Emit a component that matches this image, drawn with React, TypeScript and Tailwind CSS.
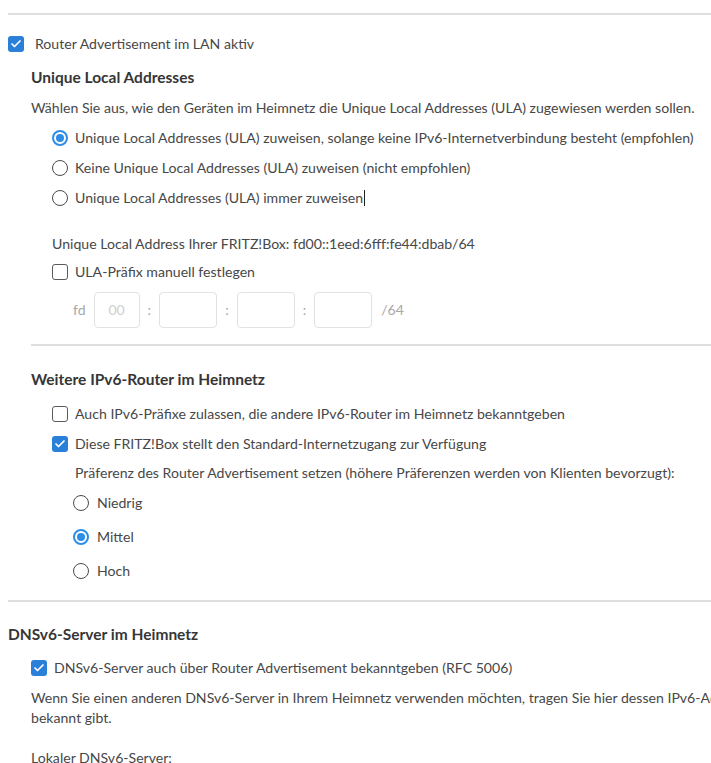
import { Check } from "lucide-react";
import { ReactNode } from "react";

function Box({ checked }: { checked?: boolean }) {
  return checked ? (
    <span className="flex h-4 w-4 shrink-0 items-center justify-center rounded-[3px] bg-[#2a7fd9]">
      <Check className="h-3 w-3 text-white" strokeWidth={3.5} />
    </span>
  ) : (
    <span className="h-4 w-4 shrink-0 rounded-[3px] border-[1.5px] border-[#5a5a5a] bg-white" />
  );
}

function Radio({ checked }: { checked?: boolean }) {
  return checked ? (
    <span className="flex h-4 w-4 shrink-0 items-center justify-center rounded-full border-2 border-[#2d8ee8]">
      <span className="h-2 w-2 rounded-full bg-[#2d8ee8]" />
    </span>
  ) : (
    <span className="h-4 w-4 shrink-0 rounded-full border-[1.5px] border-[#4a4a4a]" />
  );
}

function Row({ mark, children, className = "" }: { mark: ReactNode; children: ReactNode; className?: string }) {
  return (
    <div className={`flex h-5 items-center gap-[7px] ${className}`}>
      {mark}
      <span className="whitespace-nowrap">{children}</span>
    </div>
  );
}

function Field({ w, value }: { w: string; value?: string }) {
  return (
    <span className={`flex h-[36px] ${w} items-center justify-center rounded-[4px] border border-[#e2e2e2] text-[#cfcfcf]`}>
      {value}
    </span>
  );
}

export default function App() {
  return (
    <div
      className="h-[763px] w-[711px] overflow-hidden bg-white text-[14.1px] leading-5 text-[#474747]"
      style={{ fontFamily: "Lato, 'Open Sans', sans-serif" }}
    >
      <div className="ml-2 mt-[13px] h-[2px] bg-[#dedede]" />

      <Row mark={<Box checked />} className="ml-2 mt-[19px] gap-[11px]">
        Router Advertisement im LAN aktiv
      </Row>

      <div className="ml-[31px]">
        <h3 className="mt-[13px] text-[15.5px] font-bold text-[#363636]">Unique Local Addresses</h3>
        <p className="mt-[11px] whitespace-nowrap">
          Wählen Sie aus, wie den Geräten im Heimnetz die Unique Local Addresses (ULA) zugewiesen werden sollen.
        </p>

        <div className="ml-[21px] mt-[10px] flex flex-col gap-[10px]">
          <Row mark={<Radio checked />}>
            Unique Local Addresses (ULA) zuweisen, solange keine IPv6-Internetverbindung besteht (empfohlen)
          </Row>
          <Row mark={<Radio />}>Keine Unique Local Addresses (ULA) zuweisen (nicht empfohlen)</Row>
          <Row mark={<Radio />}>
            Unique Local Addresses (ULA) immer zuweisen
            <span className="ml-px inline-block h-4 w-px align-[-3px] bg-[#222]" />
          </Row>

          <p className="mt-[16px]">Unique Local Address Ihrer FRITZ!Box: fd00::1eed:6fff:fe44:dbab/64</p>
          <Row mark={<Box />} className="-mt-[2px]">ULA-Präfix manuell festlegen</Row>

          <div className="ml-[21px] flex items-center text-[#a8a8a8]">
            <span className="mr-[8px]">fd</span>
            <Field w="w-[46px]" value="00" />
            <span className="mx-[8px]">:</span>
            <Field w="w-[58px]" />
            <span className="mx-[8px]">:</span>
            <Field w="w-[58px]" />
            <span className="mx-[8px]">:</span>
            <Field w="w-[58px]" />
            <span className="ml-[9px]">/64</span>
          </div>
        </div>

        <div className="mt-[16px] h-[2px] bg-[#dedede]" />

        <h3 className="mt-[23px] text-[15.5px] font-bold text-[#363636]">Weitere IPv6-Router im Heimnetz</h3>
        <div className="ml-[21px] mt-[15px] flex flex-col gap-[10px]">
          <Row mark={<Box />}>Auch IPv6-Präfixe zulassen, die andere IPv6-Router im Heimnetz bekanntgeben</Row>
          <Row mark={<Box checked />}>Diese FRITZ!Box stellt den Standard-Internetzugang zur Verfügung</Row>
          <p className="-mt-[1px] ml-[23px] h-5 whitespace-nowrap">
            Präferenz des Router Advertisement setzen (höhere Präferenzen werden von Klienten bevorzugt):
          </p>
          <div className="ml-[21px] flex flex-col gap-[14px]">
            <Row mark={<Radio />} className="gap-[8px]">Niedrig</Row>
            <Row mark={<Radio checked />} className="gap-[8px]">Mittel</Row>
            <Row mark={<Radio />} className="gap-[8px]">Hoch</Row>
          </div>
        </div>
      </div>

      <div className="ml-2 mt-[19px] h-[2px] bg-[#dedede]" />

      <div className="ml-2">
        <h3 className="mt-[22px] text-[15.5px] font-bold text-[#363636]">DNSv6-Server im Heimnetz</h3>
        <div className="ml-[23px] mt-[14px]">
          <Row mark={<Box checked />}>DNSv6-Server auch über Router Advertisement bekanntgeben (RFC 5006)</Row>
          <p className="mt-[10px] whitespace-nowrap">
            Wenn Sie einen anderen DNSv6-Server in Ihrem Heimnetz verwenden möchten, tragen Sie hier dessen IPv6-Adresse ein, damit die FRITZ!Box ihn
            <br />
            bekannt gibt.
          </p>
          <p className="mt-[20px]">Lokaler DNSv6-Server:</p>
        </div>
      </div>
    </div>
  );
}
